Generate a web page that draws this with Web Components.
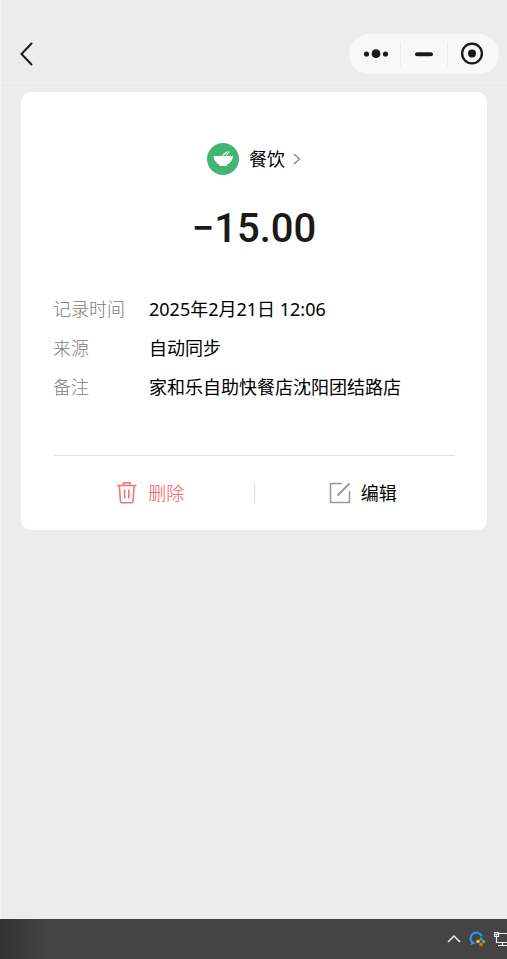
<!DOCTYPE html>
<html lang="zh-CN">
<head>
<meta charset="utf-8">
<meta name="viewport" content="width=device-width, initial-scale=1">
<title>账单详情</title>
<style>
html, body { margin: 0; }
body { background: #ececec; color: #000; font: 18px/24px "Noto Sans", "Noto Sans CJK SC", sans-serif; }
</style>
</head>
<body>
<bill-page>
  <nav-bar slot="top"></nav-bar>
  <bill-card category="餐饮" amount="−15.00">
    <detail-row label="记录时间">2025年2月21日 12:06</detail-row>
    <detail-row label="来源">自动同步</detail-row>
    <detail-row label="备注">家和乐自助快餐店沈阳团结路店</detail-row>
    <action-button slot="actions" kind="delete">删除</action-button>
    <action-button slot="actions" kind="edit">编辑</action-button>
  </bill-card>
  <task-bar slot="bottom"></task-bar>
</bill-page>
<script>
const define = (name, html, fill) => customElements.define(name, class extends HTMLElement {
  constructor() {
    super();
    const t = document.createElement('template');
    t.innerHTML = '<style>*{box-sizing:border-box}button{font:inherit;color:inherit;background:none;border:0;margin:0;padding:0;cursor:pointer}svg{display:block;flex:none}</style>' + html;
    this.attachShadow({ mode: 'open' }).append(t.content.cloneNode(true));
  }
  connectedCallback() { if (fill) fill(this, this.shadowRoot); }
});

define('bill-page', `
<style>
:host { display: flex; flex-direction: column; min-height: 100vh; }
main { flex: 1; padding: 9px 20px 24px; border-left: 1px solid #f4f4f4; }
</style>
<slot name="top"></slot><main><slot></slot></main><slot name="bottom"></slot>`);

define('nav-bar', `
<style>
:host { display: flex; align-items: center; justify-content: space-between; box-sizing: border-box; padding: 34px 8px 8px 18px; border-left: 1px solid #f4f4f4; border-bottom: 1px solid #f1f1f1; }
.capsule { display: flex; align-items: center; height: 40px; width: 150px; padding: 0 4px; border-radius: 20px; background: #f8f8f8; }
.capsule button { height: 40px; flex: 1; display: grid; place-items: center; }
i { width: 1px; height: 24px; background: #ececec; }
</style>
<button aria-label="返回"><svg width="14" height="24" viewBox="0 0 14 24" fill="none" stroke="#1a1a1a" stroke-width="2" stroke-linecap="round"><path d="M12.500 1.500L2.500 12L12.500 22.500"/></svg></button>
<div class="capsule">
<button aria-label="更多"><svg width="26" height="12" viewBox="0 0 26 12" fill="#1a1a1a"><circle cx="3.500" cy="6" r="2.600"/><circle cx="13" cy="5.700" r="4.400"/><circle cx="22.500" cy="6" r="2.600"/></svg></button><i></i>
<button aria-label="最小化"><svg width="20" height="6" viewBox="0 0 20 6"><rect x="1" y="1.300" width="18" height="4" rx="2" fill="#1a1a1a"/></svg></button><i></i>
<button aria-label="关闭"><svg width="24" height="24" viewBox="0 0 24 24"><circle cx="12" cy="11.500" r="9.900" fill="none" stroke="#1a1a1a" stroke-width="2.300"/><circle cx="12" cy="11.500" r="4" fill="#1a1a1a"/></svg></button>
</div>`);

define('bill-card', `
<style>
:host { display: block; background: #fff; border-radius: 10px; padding: 51px 32px 0; }
.category { display: flex; align-items: center; gap: 10px; margin: 0 auto; }
.name { display: flex; align-items: center; gap: 8px; }
.amount { margin: 28px 0 42px; text-align: center; font: 500 40px/52px Roboto, sans-serif; color: #1a1a1a; }
.rows { display: grid; gap: 15px; padding-bottom: 56px; }
footer { display: flex; align-items: center; border-top: 1px solid #e2e2e2; height: 75px; }
footer::before { content: ""; order: 1; width: 1px; height: 20px; background: #dedede; }
::slotted([kind=edit]) { order: 2; }
</style>
<button class="category">
<svg width="32" height="32" viewBox="0 0 32 32"><circle cx="16" cy="16" r="16" fill="#42b575"/><path d="M6.500 13H26C25.600 17.500 23 20.200 20 21.700V23H12.500V21.700C9.500 20.200 6.900 17.500 6.500 13Z" fill="#fff"/><path d="M15.500 12.500L20.500 8.500M19 12.500L22.500 8.500" stroke="#fff" stroke-width="1.100"/></svg>
<span class="name"><span id="cat"></span><svg width="8" height="12" viewBox="0 0 8 12" fill="none" stroke="#858585" stroke-width="1.300"><path d="M1 1L6.500 6L1 11"/></svg></span>
</button>
<div class="amount"></div>
<div class="rows"><slot></slot></div>
<footer><slot name="actions"></slot></footer>`, (el, root) => {
  root.querySelector('#cat').textContent = el.getAttribute('category');
  root.querySelector('.amount').textContent = el.getAttribute('amount');
});

define('detail-row', `
<style>
:host { display: grid; grid-template-columns: 72px 1fr; column-gap: 24px; }
.label { color: #808080; font-weight: 300; }
</style>
<span class="label"></span><span><slot></slot></span>`, (el, root) => {
  root.querySelector('.label').textContent = el.getAttribute('label');
});

const icons = {
  delete: '<svg width="22" height="24" viewBox="0 0 22 24" fill="none" stroke="#f57373" stroke-width="1.600"><path d="M1 4.500H20.500M7.500 4V1.800H14V4M3.300 4.500L4.500 20.200Q4.600 21.700 6 21.700H15.500Q16.900 21.700 17 20.200L18.200 4.500M8.500 8.500L8.800 17.500M13 8.500L12.700 17.500"/></svg>',
  edit: '<svg width="22" height="24" viewBox="0 0 22 24" fill="none" stroke="#999" stroke-width="1.600"><path d="M13 2.500H1.500V21.500H20.500V10"/><path d="M8.500 14.500L20.500 2.500" stroke-width="2"/></svg>'
};
define('action-button', `
<style>
:host { flex: 1; display: flex; box-sizing: border-box; }
:host([kind=delete]) { color: #fa5151; font-weight: 300; }
:host([kind=delete]) button { padding-right: 6px; }
:host([kind=edit]) button { padding-left: 16px; }
button { flex: 1; display: flex; align-items: center; justify-content: center; gap: 10px; }
</style>
<button><span id="icon"></span><span><slot></slot></span></button>`, (el, root) => {
  root.querySelector('#icon').innerHTML = icons[el.getAttribute('kind')];
});

define('task-bar', `
<style>
:host { display: flex; justify-content: flex-end; align-items: center; gap: 8px; height: 40px; overflow: hidden; background: linear-gradient(90deg, #333, #444 50px); }
button { display: block; }
</style>
<button aria-label="显示隐藏的图标"><svg width="14" height="10" viewBox="0 0 14 10" fill="none" stroke="#eee" stroke-width="1.500"><path d="M1 8L7 2L13 8"/></svg></button>
<button aria-label="同步助手"><svg width="17" height="16" viewBox="0 0 17 16"><path d="M5 12.500A5.700 5.700 0 1 1 12.700 5.500" fill="none" stroke="#2f96ee" stroke-width="2.200"/><path d="M1.500 14L3 10L6.500 12.500Z" fill="#2f96ee"/><circle cx="9" cy="10.500" r="1.800" fill="#ffc928"/><circle cx="14.500" cy="10.500" r="1.800" fill="#55b947"/><circle cx="12" cy="13.500" r="1.800" fill="#f4602d"/><circle cx="12" cy="8" r="1.600" fill="#38a0ee"/></svg></button>
<button aria-label="网络"><svg width="13" height="16" viewBox="0 0 13 16" fill="none" stroke="#eee" stroke-width="1.200"><path d="M5 2.500H13M2.500 6V11.500H13M8.500 11.500V14.500M4 14.500H13"/><path d="M.6 1.500H4.600V5.500H.6Z"/><path d="M1.500 3L2.600 4L4 2.500"/></svg></button>`);
</script>
</body>
</html>
